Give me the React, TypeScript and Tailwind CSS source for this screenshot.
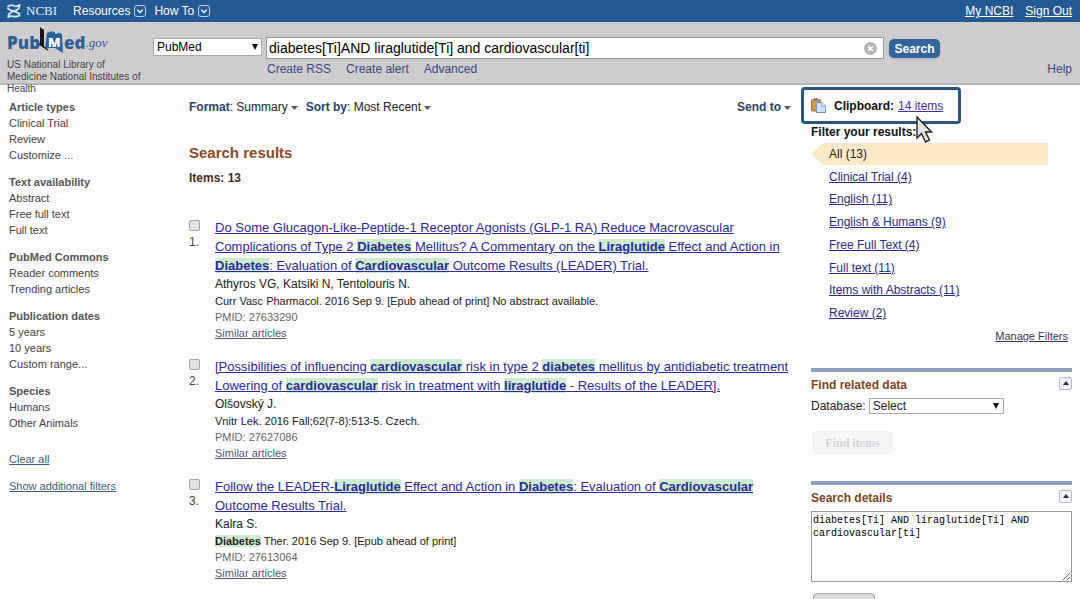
import { Fragment } from "react";
import type { ReactNode } from "react";

interface Group {
  label: string;
  items: string[];
}

interface Article {
  id: number;
  /** One entry per line; *word* marks a search hit. */
  title: string[];
  authors: string;
  journal: string;
  pmid: string;
}

const facets: Group[] = [
  { label: "Article types", items: ["Clinical Trial", "Review", "Customize ..."] },
  { label: "Text availability", items: ["Abstract", "Free full text", "Full text"] },
  { label: "PubMed Commons", items: ["Reader comments", "Trending articles"] },
  { label: "Publication dates", items: ["5 years", "10 years", "Custom range..."] },
  { label: "Species", items: ["Humans", "Other Animals"] },
];

const articles: Article[] = [
  {
    id: 1,
    title: [
      "Do Some Glucagon-Like-Peptide-1 Receptor Agonists (GLP-1 RA) Reduce Macrovascular",
      "Complications of Type 2 *Diabetes* Mellitus? A Commentary on the *Liraglutide* Effect and Action in",
      "*Diabetes*: Evaluation of *Cardiovascular* Outcome Results (LEADER) Trial.",
    ],
    authors: "Athyros VG, Katsiki N, Tentolouris N.",
    journal: "Curr Vasc Pharmacol. 2016 Sep 9. [Epub ahead of print] No abstract available.",
    pmid: "27633290",
  },
  {
    id: 2,
    title: [
      "[Possibilities of influencing *cardiovascular* risk in type 2 *diabetes* mellitus by antidiabetic treatment",
      "Lowering of *cardiovascular* risk in treatment with *liraglutide* - Results of the LEADER].",
    ],
    authors: "Olšovský J.",
    journal: "Vnitr Lek. 2016 Fall;62(7-8):513-5. Czech.",
    pmid: "27627086",
  },
  {
    id: 3,
    title: [
      "Follow the LEADER-*Liraglutide* Effect and Action in *Diabetes*: Evaluation of *Cardiovascular*",
      "Outcome Results Trial.",
    ],
    authors: "Kalra S.",
    journal: "*Diabetes* Ther. 2016 Sep 9. [Epub ahead of print]",
    pmid: "27613064",
  },
];

const filters = [
  "Clinical Trial (4)",
  "English (11)",
  "English & Humans (9)",
  "Free Full Text (4)",
  "Full text (11)",
  "Items with Abstracts (11)",
  "Review (2)",
];

function Marked({ text }: { text: string }) {
  return (
    <>
      {text.split("*").map((part, i) =>
        i % 2 ? (
          <b key={i} className="bg-[#cdeccd]">
            {part}
          </b>
        ) : (
          <Fragment key={i}>{part}</Fragment>
        ),
      )}
    </>
  );
}

function Caret() {
  return (
    <svg width="7" height="4" viewBox="0 0 7 4" className="ml-[3px] inline-block fill-[#5a5a5a]">
      <path d="M0 0h7L3.500 4z" />
    </svg>
  );
}

function DropIcon() {
  return (
    <svg width="12" height="12" viewBox="0 0 12 12" fill="none" stroke="#b9d0e6">
      <rect x="0.500" y="0.500" width="11" height="11" rx="2.500" />
      <path d="M3.300 4.700 6 7.400l2.700-2.700" stroke="#fff" strokeWidth="1.400" />
    </svg>
  );
}

function SelectArrow({ className }: { className: string }) {
  return (
    <svg width="6" height="6" viewBox="0 0 6 6" className={`pointer-events-none absolute ${className}`}>
      <path d="M0 0h6L3 6z" fill="#111" />
    </svg>
  );
}

function TopBar() {
  return (
    <nav className="flex h-[22px] items-center bg-[#235a94] pl-[7px] pr-2 text-[12px] text-white">
      <a href="#ncbi" className="flex items-center gap-[5px] font-['Liberation_Serif',serif] text-[13px] text-[#e4edf6]">
        <svg width="14" height="16" viewBox="0 0 14 16" fill="none" stroke="#d5e4f2" strokeWidth="1.800" strokeLinecap="round">
          <path d="M1 3.500C3.500 1 5 2 7.500 3S11 3.500 12.500 2" />
          <path d="M12.500 2C13 6 10 7 7 8S1 10.500 1.500 14" />
          <path d="M1 5.500C2 8 9 7.500 12.500 11" />
          <path d="M1.500 14C4.500 11.500 8 15.500 12.500 12.500" />
        </svg>
        NCBI
      </a>
      <button className="ml-4 flex items-center gap-1">
        Resources <DropIcon />
      </button>
      <button className="ml-2 flex items-center gap-1">
        How To <DropIcon />
      </button>
      <div className="ml-auto flex gap-3 underline">
        <a href="#my">My NCBI</a>
        <a href="#signout">Sign Out</a>
      </div>
    </nav>
  );
}

function Logo() {
  return (
    <a href="#home" className="flex h-[30px] items-end font-['Open_Sans',sans-serif] text-[17px] leading-6 font-extrabold text-[#2f6193]">
      Pub
      <svg width="26" height="29" viewBox="0 0 26 29" className="-ml-[2px]">
        <path d="M2 1 6 4v18l-4-4z" fill="#16181c" />
        <path d="M7 22 9 7q6-4 9 1 3-2 6 0l1 19-8-5z" fill="#2b639c" />
        <path d="m1 18 6 4 3 2" stroke="#16181c" strokeWidth="1.500" fill="none" />
        <text x="10" y="21" fontFamily="Open Sans, sans-serif" fontSize="13" fontWeight="800" fill="#fff">
          M
        </text>
      </svg>
      ed
      <span className="font-['Liberation_Serif',serif] text-[13px] font-normal italic">.gov</span>
    </a>
  );
}

function SearchHeader() {
  return (
    <header className="flex h-[63px] border-b-2 border-[#b9b7ba] bg-[#cecccf] pr-2 text-[12px]">
      <div className="w-[153px] shrink-0 pl-[7px] pt-[3px]">
        <Logo />
        <p className="mt-1 text-[10px] leading-3 text-[#444]">
          US National Library of
          <br />
          Medicine National Institutes of
          <br />
          Health
        </p>
      </div>
      <div className="relative mt-4 h-[18px] w-[109px] shrink-0">
        <select
          aria-label="Search database"
          className="block h-full w-full appearance-none border border-[#aaa] bg-white pl-[3px] text-[12px] leading-4"
        >
          <option>PubMed</option>
        </select>
        <SelectArrow className="right-1 top-[6px]" />
      </div>
      <div className="ml-1 min-w-0 flex-1 pt-[15px]">
        <div className="flex h-[22px] items-center border border-[#999] bg-white pr-[6px]">
          <input
            aria-label="Search term"
            defaultValue="diabetes[Ti]AND liraglutide[Ti] and cardiovascular[ti]"
            className="min-w-0 flex-1 pl-[2px] text-[14px] text-black outline-none"
          />
          <button aria-label="Clear search">
            <svg width="13" height="13" viewBox="0 0 13 13">
              <circle cx="6.500" cy="6.500" r="6.500" fill="#b5b5b5" />
              <path d="m4.300 4.300 4.400 4.400m0-4.400L4.300 8.700" stroke="#fff" strokeWidth="1.800" />
            </svg>
          </button>
        </div>
        <div className="mt-[2px] flex gap-[15px] pl-px leading-4 text-[#3b4a7c]">
          <a href="#rss">Create RSS</a>
          <a href="#alert">Create alert</a>
          <a href="#advanced">Advanced</a>
        </div>
      </div>
      <div className="ml-[5px] flex w-[183px] shrink-0 flex-col pt-[17px]">
        <button className="h-[19px] w-[51px] rounded-[5px] bg-[#32659a] text-[12px] font-bold text-white shadow-sm">
          Search
        </button>
        <a href="#help" className="mt-[3px] self-end leading-4 text-[#3b4a7c]">
          Help
        </a>
      </div>
    </header>
  );
}

function Facets() {
  return (
    <aside className="w-[188px] shrink-0 pl-[9px] pt-[14px] text-[11px] leading-4 text-[#444]">
      <div className="flex flex-col gap-[11px]">
        {facets.map((group) => (
          <section key={group.label}>
            <h3 className="font-bold text-[#555]">{group.label}</h3>
            <ul>
              {group.items.map((item) => (
                <li key={item}>
                  <a href="#filter">{item}</a>
                </li>
              ))}
            </ul>
          </section>
        ))}
      </div>
      <a href="#clear" className="mt-5 block text-[#3e5f7c] underline">
        Clear all
      </a>
      <a href="#more" className="mt-[11px] block text-[#3e5f7c] underline">
        Show additional filters
      </a>
    </aside>
  );
}

function ArticleRow({ article }: { article: Article }) {
  return (
    <li className="flex">
      <div className="w-[26px] shrink-0 pt-[2px] text-[12px] text-[#444]">
        <input
          type="checkbox"
          aria-label={`Select article ${article.id}`}
          className="block h-[11px] w-[11px] appearance-none rounded-[2px] border border-[#a5a5a5] bg-[#e2e2e2]"
        />
        <span className="mt-[3px] block leading-4">{article.id}.</span>
      </div>
      <div className="whitespace-nowrap text-[11px] leading-4">
        <a href="#article" className="block text-[13px] leading-[19px] text-[#2b2b9b] underline">
          {article.title.map((line) => (
            <span key={line} className="block">
              <Marked text={line} />
            </span>
          ))}
        </a>
        <p className="pt-px text-[12px] leading-[17px] text-[#222]">{article.authors}</p>
        <p className="text-[#222]">
          <Marked text={article.journal} />
        </p>
        <p className="text-[#666]">PMID: {article.pmid}</p>
        <a href="#similar" className="block text-[#555577] underline">
          Similar articles
        </a>
      </div>
    </li>
  );
}

function Results() {
  return (
    <main className="min-w-0 flex-1 pl-px pt-[14px]">
      <div className="flex text-[12px] leading-4 text-[#222]">
        <button>
          <b className="text-[#2c4468]">Format</b>: Summary
          <Caret />
        </button>
        <button className="ml-2">
          <b className="text-[#2c4468]">Sort by</b>: Most Recent
          <Caret />
        </button>
        <button className="ml-auto mr-[10px] font-bold text-[#2c4468]">
          Send to
          <Caret />
        </button>
      </div>
      <h1 className="mt-7 text-[15px] leading-5 font-bold text-[#8b4a2b]">Search results</h1>
      <h2 className="mt-[7px] text-[12px] leading-4 font-bold text-[#4a2a1a]">Items: 13</h2>
      <ol className="mt-8 flex flex-col gap-4">
        {articles.map((article) => (
          <ArticleRow key={article.id} article={article} />
        ))}
      </ol>
    </main>
  );
}

function Panel({ title, children }: { title: string; children: ReactNode }) {
  return (
    <section className="border-t-4 border-[#8da2bf]">
      <div className="flex h-[26px] items-center justify-between">
        <h3 className="text-[12px] font-bold text-[#7d4325]">{title}</h3>
        <button
          aria-label={`Collapse ${title}`}
          className="mb-1 flex h-[13px] w-[13px] items-center justify-center rounded-[2px] border border-[#b5bcc8] bg-[#f3f5f9]"
        >
          <svg width="6" height="4" viewBox="0 0 6 4">
            <path d="M3 0l3 4H0z" fill="#1d2d50" />
          </svg>
        </button>
      </div>
      {children}
    </section>
  );
}

function RightColumn() {
  return (
    <aside className="relative w-[279px] shrink-0 pr-2 pt-[2px] text-[12px] text-[#222]">
      <div className="flex h-[37px] w-[160px] items-center rounded-[4px] border-[3px] border-[#2a5580] pl-[7px]">
        <svg width="15" height="15" viewBox="0 0 15 15">
          <rect x="0.500" y="1.500" width="9" height="11.500" rx="1" fill="#c99a55" stroke="#9a733a" />
          <rect x="3" y="0" width="4" height="3" fill="#8a8a8a" />
          <path d="M5.500 4.500h5.500l3.500 3.500v6.500h-9z" fill="#cfdff2" stroke="#7b95ba" />
          <path d="M11 4.500v3.500h3.500" fill="#fff" stroke="#7b95ba" />
        </svg>
        <b className="ml-2 text-[#111]">Clipboard:</b>
        <a href="#clipboard" className="ml-1 text-[#4a30a8] underline">
          14 items
        </a>
      </div>
      <svg width="18" height="28" viewBox="0 0 18 28" className="absolute left-[114px] top-[31px]">
        <path d="M2 1v21l4.500-4.500 4 8.500 4-2-4-8h6z" fill="#e4e4e4" stroke="#222" strokeWidth="1.400" />
      </svg>
      <div className="pl-[10px]">
        <h3 className="leading-4 font-bold text-[#111]">Filter your results:</h3>
        <ul className="mt-[3px] flex h-[181px] flex-col justify-between leading-[22px]">
          <li className="mr-6 flex">
            <svg width="12" height="22" viewBox="0 0 12 22" className="fill-[#fce9c8]">
              <path d="M12 0v22L0 11z" />
            </svg>
            <span className="flex-1 bg-[#fce9c8] pl-[6px]">All (13)</span>
          </li>
          {filters.map((filter) => (
            <li key={filter} className="pl-[18px]">
              <a href="#filter" className="text-[#2b2b8b] underline">
                {filter}
              </a>
            </li>
          ))}
        </ul>
        <a href="#manage" className="mt-1 mr-1 block text-right text-[11px] leading-4 text-[#33335f] underline">
          Manage Filters
        </a>
        <div className="mt-6 flex flex-col gap-[27px]">
          <Panel title="Find related data">
            <div className="flex h-4 items-center">
              <label htmlFor="related">Database:</label>
              <div className="relative ml-[3px] h-4 w-[135px]">
                <select
                  id="related"
                  className="block h-full w-full appearance-none border border-[#aaa] bg-white pl-[3px] text-[12px] leading-[14px]"
                >
                  <option>Select</option>
                </select>
                <SelectArrow className="right-[5px] top-[5px]" />
              </div>
            </div>
            <button
              disabled
              className="ml-[2px] mt-[17px] block h-[23px] w-[79px] rounded-[4px] border border-[#eeeeee] bg-[#f7f7f8] font-['Liberation_Serif',serif] text-[12px] font-bold text-[#d3d3d8]"
            >
              Find items
            </button>
          </Panel>
          <Panel title="Search details">
            <textarea
              aria-label="Search details"
              defaultValue="diabetes[Ti] AND liraglutide[Ti] AND cardiovascular[ti]"
              className="block h-[71px] w-full border border-[#999] p-px pt-[2px] font-['Liberation_Mono',monospace] text-[10px] leading-[13px] text-black"
            />
            <button
              aria-label="Run search"
              className="ml-[2px] mt-[11px] block h-[23px] w-[62px] rounded-[4px] border border-[#aaa] bg-[#dcdcdf]"
            />
          </Panel>
        </div>
      </div>
    </aside>
  );
}

export default function App() {
  return (
    <div className="h-screen overflow-hidden bg-[#fdfdfd] font-['Liberation_Sans',Arial,sans-serif]">
      <TopBar />
      <SearchHeader />
      <div className="flex">
        <Facets />
        <Results />
        <RightColumn />
      </div>
    </div>
  );
}
